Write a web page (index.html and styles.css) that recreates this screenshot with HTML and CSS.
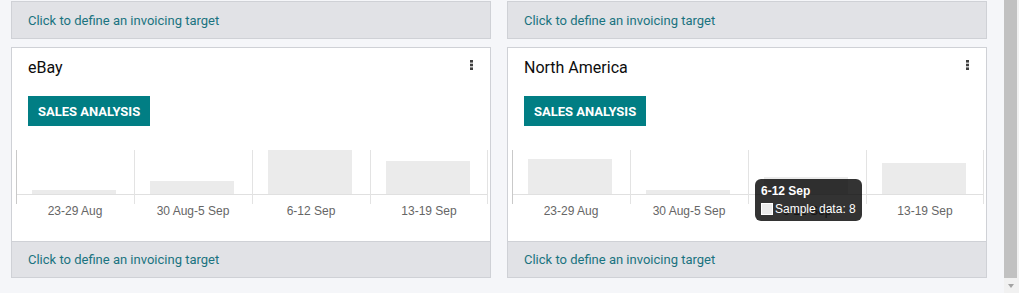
FILE: index.html
```html
<!DOCTYPE html>
<html lang="en">
<head>
  <meta charset="UTF-8" />
  <title>Sales Teams</title>
  <link rel="stylesheet" href="styles.css">
</head>
<body>
  <div class="view">
    <div class="dashboard">
      <div class="card card-tail">
        <a class="card-footer" href="#">Click to define an invoicing target</a>
      </div>
      <div class="card card-tail">
        <a class="card-footer" href="#">Click to define an invoicing target</a>
      </div>

      <div class="card">
        <div class="card-body">
          <div class="card-top">
            <span class="card-title">eBay</span>
            <span class="kebab"><svg width="3" height="10" viewBox="0 0 3 10"><rect x="0" y="0" width="3" height="2.6"/><rect x="0" y="3.7" width="3" height="2.6"/><rect x="0" y="7.4" width="3" height="2.6"/></svg></span>
          </div>
          <button class="btn-primary">Sales Analysis</button>
          <div class="chart">
            <div class="plot"><div class="area"><div class="bar" style="height:4px"></div></div></div>
            <div class="plot"><div class="area"><div class="bar" style="height:13px"></div></div></div>
            <div class="plot"><div class="area"><div class="bar" style="height:44px"></div></div></div>
            <div class="plot"><div class="area"><div class="bar" style="height:33px"></div></div></div>
            <div class="label">23-29 Aug</div>
            <div class="label">30 Aug-5 Sep</div>
            <div class="label">6-12 Sep</div>
            <div class="label">13-19 Sep</div>
          </div>
        </div>
        <a class="card-footer" href="#">Click to define an invoicing target</a>
      </div>

      <div class="card">
        <div class="card-body">
          <div class="card-top">
            <span class="card-title">North America</span>
            <span class="kebab"><svg width="3" height="10" viewBox="0 0 3 10"><rect x="0" y="0" width="3" height="2.6"/><rect x="0" y="3.7" width="3" height="2.6"/><rect x="0" y="7.4" width="3" height="2.6"/></svg></span>
          </div>
          <button class="btn-primary">Sales Analysis</button>
          <div class="chart">
            <div class="plot"><div class="area"><div class="bar" style="height:35px"></div></div></div>
            <div class="plot"><div class="area"><div class="bar" style="height:4px"></div></div></div>
            <div class="plot"><div class="area"><div class="bar" style="height:17px"></div></div>
              <div class="tooltip">
                <div class="tooltip-title">6-12 Sep</div>
                <div class="tooltip-body"><span class="swatch"></span>Sample data: 8</div>
              </div>
            </div>
            <div class="plot"><div class="area"><div class="bar" style="height:31px"></div></div></div>
            <div class="label">23-29 Aug</div>
            <div class="label">30 Aug-5 Sep</div>
            <div class="label">6-12 Sep</div>
            <div class="label">13-19 Sep</div>
          </div>
        </div>
        <a class="card-footer" href="#">Click to define an invoicing target</a>
      </div>
    </div>
  </div>

  <div class="scrollbar">
    <div class="thumb"></div>
    <div class="arrow"></div>
  </div>
</body>
</html>
```

FILE: styles.css
```css
* {
  margin: 0;
  padding: 0;
  box-sizing: border-box;
}

html, body {
  width: 100%;
  height: 100%;
  overflow: hidden;
}

body {
  display: flex;
  background: #f5f6f9;
  font-family: Roboto, 'Noto Sans', sans-serif;
  color: #212529;
}

.view {
  flex: 1;
  padding: 1px 0 0 11px;
}

.dashboard {
  display: grid;
  grid-template-columns: 480px 480px;
  column-gap: 16px;
  row-gap: 8px;
}

.card {
  background: #fff;
  border: 1px solid #cfd1d6;
  display: flex;
  flex-direction: column;
}

.card-body {
  height: 193px;
  padding: 8px 2px 0 4px;
}

.card-top {
  display: flex;
  justify-content: space-between;
  align-items: flex-start;
  padding: 0 15px 0 12px;
}

.card-title {
  font-size: 16px;
  line-height: 24px;
  color: #0d0d0d;
}

.kebab {
  display: flex;
  padding-top: 4px;
}

.kebab svg {
  fill: #3f3f3f;
}

.btn-primary {
  display: block;
  margin: 16px 0 0 12px;
  height: 30px;
  padding: 0 10px;
  border: none;
  background: #017e84;
  color: #fff;
  font-family: Roboto, sans-serif;
  font-weight: 700;
  font-size: 13px;
  text-transform: uppercase;
  cursor: pointer;
}

.chart {
  display: grid;
  grid-template-columns: repeat(4, 1fr);
  width: 472px;
  margin-top: 24px;
  font-family: 'Liberation Sans', Arial, sans-serif;
}

.plot {
  position: relative;
  height: 54px;
  border-left: 1px solid #e3e3e3;
}

.plot:first-child {
  border-left-color: #c9c9c9;
}

.plot:nth-child(4) {
  border-right: 1px solid #e3e3e3;
}

.area {
  height: 45px;
  border-bottom: 1px solid #e0e0e0;
  display: flex;
  align-items: flex-end;
  justify-content: center;
}

.bar {
  width: 84px;
  margin-right: 3px;
  background: #ebebeb;
}

.label {
  text-align: center;
  font-size: 12px;
  line-height: 14px;
  color: #666;
}

.tooltip {
  position: absolute;
  left: 6px;
  top: 29px;
  z-index: 2;
  padding: 6px;
  border-radius: 6px;
  background: rgba(0, 0, 0, 0.8);
  color: #fff;
  font-size: 12px;
  line-height: 12px;
  white-space: nowrap;
}

.tooltip-title {
  font-weight: 700;
  margin-bottom: 6px;
}

.tooltip-body {
  display: flex;
  align-items: center;
}

.swatch {
  width: 12px;
  height: 12px;
  margin-right: 2px;
  background: #ebebeb;
  border: 1px solid #fff;
}

.card-footer {
  display: flex;
  align-items: center;
  height: 36px;
  padding: 0 16px;
  background: #e1e2e6;
  border-top: 1px solid #cfd1d6;
  color: #1a7380;
  font-size: 13px;
  text-decoration: none;
}

.card-tail .card-footer {
  border-top: none;
}

.scrollbar {
  width: 15px;
  display: flex;
  flex-direction: column;
  background: #f1f1f1;
}

.thumb {
  flex: 1;
  width: 13px;
  background: #c1c1c1;
}

.arrow {
  height: 15px;
  display: flex;
  align-items: center;
  justify-content: center;
  padding-right: 2px;
}

.arrow::before {
  content: "";
  border-left: 3px solid transparent;
  border-right: 3px solid transparent;
  border-top: 4px solid #a3a3a3;
}
```
